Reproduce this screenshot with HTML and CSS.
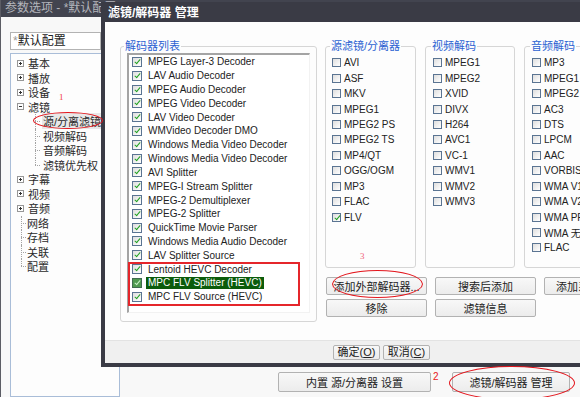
FILE: index.html
```html
<!DOCTYPE html>
<html lang="zh">
<head>
    <meta charset="UTF-8">
    <title>滤镜/解码器 管理</title>
    <link rel="stylesheet" href="styles.css">
</head>
<body>
<div class="desk">
    <div class="win">
        <div class="win-title">参数选项 - *默认配置</div>
        <div class="win-body">
            <div class="side">
                <div class="combo"><span class="star">*</span>默认配置</div>
                <div class="tree">
                    <div class="row node"><i class="exp plus"></i>基本</div>
                    <div class="row node"><i class="exp plus"></i>播放</div>
                    <div class="row node"><i class="exp plus"></i>设备</div>
                    <div class="row node"><i class="exp"></i>滤镜</div>
                    <div class="row sub sel"><span>源/分离滤镜</span></div>
                    <div class="row sub">视频解码</div>
                    <div class="row sub">音频解码</div>
                    <div class="row sub last">滤镜优先权</div>
                    <div class="row node"><i class="exp plus"></i>字幕</div>
                    <div class="row node"><i class="exp plus"></i>视频</div>
                    <div class="row node"><i class="exp plus"></i>音频</div>
                    <div class="row leaf">网络</div>
                    <div class="row leaf">存档</div>
                    <div class="row leaf">关联</div>
                    <div class="row leaf last">配置</div>
                </div>
            </div>
            <div class="main">
                <button class="btn wide">内置 源/分离器 设置</button>
                <button class="btn mid">滤镜/解码器 管理</button>
            </div>
        </div>
    </div>

    <div class="dlg">
        <div class="dlg-title">滤镜/解码器 管理</div>
        <div class="dlg-body">
            <fieldset class="grp big">
                <legend>解码器列表</legend>
                <div class="listbox">
                    <div class="it"><i class="cb on"></i><span class="t">MPEG Layer-3 Decoder</span></div>
                    <div class="it"><i class="cb on"></i><span class="t">LAV Audio Decoder</span></div>
                    <div class="it"><i class="cb on"></i><span class="t">MPEG Audio Decoder</span></div>
                    <div class="it"><i class="cb on"></i><span class="t">MPEG Video Decoder</span></div>
                    <div class="it"><i class="cb on"></i><span class="t">LAV Video Decoder</span></div>
                    <div class="it"><i class="cb on"></i><span class="t">WMVideo Decoder DMO</span></div>
                    <div class="it"><i class="cb on"></i><span class="t">Windows Media Video Decoder</span></div>
                    <div class="it"><i class="cb on"></i><span class="t">Windows Media Video Decoder</span></div>
                    <div class="it"><i class="cb on"></i><span class="t">AVI Splitter</span></div>
                    <div class="it"><i class="cb on"></i><span class="t">MPEG-I Stream Splitter</span></div>
                    <div class="it"><i class="cb on"></i><span class="t">MPEG-2 Demultiplexer</span></div>
                    <div class="it"><i class="cb on"></i><span class="t">MPEG-2 Splitter</span></div>
                    <div class="it"><i class="cb on"></i><span class="t">QuickTime Movie Parser</span></div>
                    <div class="it"><i class="cb on"></i><span class="t">Windows Media Audio Decoder</span></div>
                    <div class="it"><i class="cb on"></i><span class="t">LAV Splitter Source</span></div>
                    <div class="it"><i class="cb on"></i><span class="t">Lentoid HEVC Decoder</span></div>
                    <div class="it hl"><i class="cb on"></i><span class="t">MPC FLV Splitter (HEVC)</span></div>
                    <div class="it"><i class="cb on"></i><span class="t">MPC FLV Source (HEVC)</span></div>
                    <div class="mark"></div>
                </div>
            </fieldset>

            <div class="rcol">
                <div class="groups">
                    <fieldset class="grp sm w91">
                        <legend>源滤镜/分离器</legend>
                        <div class="it"><i class="cb"></i>AVI</div>
                        <div class="it"><i class="cb"></i>ASF</div>
                        <div class="it"><i class="cb"></i>MKV</div>
                        <div class="it"><i class="cb"></i>MPEG1</div>
                        <div class="it"><i class="cb"></i>MPEG2 PS</div>
                        <div class="it"><i class="cb"></i>MPEG2 TS</div>
                        <div class="it"><i class="cb"></i>MP4/QT</div>
                        <div class="it"><i class="cb"></i>OGG/OGM</div>
                        <div class="it"><i class="cb"></i>MP3</div>
                        <div class="it"><i class="cb"></i>FLAC</div>
                        <div class="it"><i class="cb on"></i>FLV</div>
                    </fieldset>
                    <fieldset class="grp sm">
                        <legend>视频解码</legend>
                        <div class="it"><i class="cb"></i>MPEG1</div>
                        <div class="it"><i class="cb"></i>MPEG2</div>
                        <div class="it"><i class="cb"></i>XVID</div>
                        <div class="it"><i class="cb"></i>DIVX</div>
                        <div class="it"><i class="cb"></i>H264</div>
                        <div class="it"><i class="cb"></i>AVC1</div>
                        <div class="it"><i class="cb"></i>VC-1</div>
                        <div class="it"><i class="cb"></i>WMV1</div>
                        <div class="it"><i class="cb"></i>WMV2</div>
                        <div class="it"><i class="cb"></i>WMV3</div>
                    </fieldset>
                    <fieldset class="grp sm">
                        <legend>音频解码</legend>
                        <div class="it"><i class="cb"></i>MP3</div>
                        <div class="it"><i class="cb"></i>MPEG1</div>
                        <div class="it"><i class="cb"></i>MPEG2</div>
                        <div class="it"><i class="cb"></i>AC3</div>
                        <div class="it"><i class="cb"></i>DTS</div>
                        <div class="it"><i class="cb"></i>LPCM</div>
                        <div class="it"><i class="cb"></i>AAC</div>
                        <div class="it"><i class="cb"></i>VORBIS</div>
                        <div class="it"><i class="cb"></i>WMA V1</div>
                        <div class="it"><i class="cb"></i>WMA V2</div>
                        <div class="it"><i class="cb"></i>WMA PRO</div>
                        <div class="it"><i class="cb"></i>WMA 无损</div>
                        <div class="it"><i class="cb"></i>FLAC</div>
                    </fieldset>
                </div>
                <div class="actions">
                    <button class="btn">添加外部解码器...</button>
                    <button class="btn">搜索后添加</button>
                    <button class="btn">添加系统解码器</button>
                    <button class="btn">移除</button>
                    <button class="btn">滤镜信息</button>
                </div>
            </div>
        </div>
        <div class="dlg-foot">
            <button class="btn small">确定(<u>O</u>)</button>
            <button class="btn small">取消(<u>C</u>)</button>
        </div>
    </div>

    <!-- red notes drawn over the screenshot -->
    <div class="ring ring1"></div>
    <div class="ring ring2"></div>
    <div class="ring ring3"></div>
    <span class="num num1">1</span>
    <span class="num num2">2</span>
    <span class="num num3">3</span>
</div>
</body>
</html>
```

FILE: styles.css
```css
body {
    margin: 0;
    font-family: "Liberation Sans", "Noto Sans CJK SC", sans-serif;
    font-size: 10px;
    color: #222;
}
.desk {
    position: relative;
    width: 580px;
    height: 397px;
    overflow: hidden;
    background: #f7f7f7;
}

/* back window */
.win {
    display: flex;
    flex-direction: column;
    height: 100%;
    border-left: 1px solid #5b5c64;
    box-sizing: border-box;
}
.win-title {
    height: 17px;
    line-height: 17px;
    background: #42444f;
    color: #b4b5bc;
    font-size: 12px;
    padding-left: 4px;
    white-space: nowrap;
}
.win-body {
    flex: 1;
    display: flex;
    background: #f8f8f8;
}
.side {
    width: 110px;
    padding: 15px 0 0 9px;
    display: flex;
    flex-direction: column;
    gap: 3px;
}
.combo {
    height: 18px;
    width: 91px;
    box-sizing: border-box;
    border: 1px solid #b3b3b3;
    background: #fff;
    line-height: 16px;
    padding-left: 2px;
    font-size: 12px;
    white-space: nowrap;
}
.combo .star {
    color: #999;
}
.tree {
    flex: 1;
    border: 1px solid #a9bdd8;
    background: #fdfdfd;
    padding-top: 2px;
    font-size: 11px;
}
.tree .row {
    position: relative;
    height: 14.5px;
    display: flex;
    align-items: center;
    white-space: nowrap;
    color: #2a2a2a;
}
.tree .node {
    padding-left: 6px;
}
.tree .leaf {
    padding-left: 16px;
}
.tree .sub {
    padding-left: 32px;
}
.tree .leaf::before,
.tree .sub::before {
    content: "";
    position: absolute;
    left: 10px;
    top: 0;
    bottom: 0;
    border-left: 1px dotted #a3a3a3;
}
.tree .leaf::after,
.tree .sub::after {
    content: "";
    position: absolute;
    left: 10px;
    width: 5px;
    top: 50%;
    border-top: 1px dotted #a3a3a3;
}
.tree .sub::before,
.tree .sub::after {
    left: 24px;
}
.tree .last::before {
    bottom: 50%;
}
.tree .sel span {
    background: #e8e8e8;
    padding: 0 1px;
    margin-left: -1px;
}
.exp {
    position: relative;
    width: 7px;
    height: 7px;
    box-sizing: border-box;
    border: 1px solid #979797;
    background: #fff;
    margin-right: 4px;
    flex: none;
}
.exp::before {
    content: "";
    position: absolute;
    left: 1px;
    right: 1px;
    top: 2px;
    height: 1px;
    background: #333;
}
.exp.plus::after {
    content: "";
    position: absolute;
    top: 1px;
    bottom: 1px;
    left: 2px;
    width: 1px;
    background: #333;
}
.main {
    flex: 1;
    display: flex;
    justify-content: flex-end;
    align-items: flex-end;
    gap: 21px;
    padding: 0 10px 5px 0;
}

/* buttons */
.btn {
    font: inherit;
    font-size: 11px;
    color: #222;
    height: 18px;
    padding: 0;
    border: 1px solid #b2b2b2;
    border-radius: 2px;
    background: linear-gradient(#f8f8f8, #ececec);
    white-space: nowrap;
    overflow: hidden;
}
.btn.wide {
    width: 153px;
    height: 20px;
}
.btn.mid {
    width: 118px;
    height: 20px;
}
.btn.small {
    width: 47px;
    height: 15px;
    line-height: 12px;
}

/* dialog */
.dlg {
    position: absolute;
    left: 101px;
    top: 2px;
    width: 561px;
    height: 365px;
    box-sizing: border-box;
    border: 4px solid #3a3b45;
    border-top: 0;
    background: #3a3b45;
    display: flex;
    flex-direction: column;
}
.dlg-title {
    height: 20px;
    box-sizing: border-box;
    padding: 3px 0 0 3px;
    line-height: 17px;
    color: #fff;
    font-size: 12px;
    font-weight: bold;
    white-space: nowrap;
}
.dlg-body {
    flex: 1;
    display: flex;
    gap: 8px;
    padding: 18px 0 0 15px;
    background: #fdfdfd;
}
.dlg-foot {
    height: 23px;
    box-sizing: border-box;
    border-top: 1px solid #e3e3e3;
    background: #f0f0f0;
    display: flex;
    justify-content: center;
    align-items: center;
    gap: 3px;
}

.grp {
    margin: 0;
    box-sizing: border-box;
    min-width: 0;
    border: 1px solid #d6d6d6;
    border-radius: 3px;
    padding: 3px 0 0 7px;
}
.grp legend {
    font-size: 11px;
    line-height: 12px;
    color: #2c62d2;
    padding: 0 1px;
    margin-left: -2px;
    white-space: nowrap;
}
.grp.big {
    width: 197px;
    height: 282px;
    padding: 1px 6px 8px 6px;
}
.grp.big legend {
    margin-left: -3px;
}
.grp.sm {
    width: 90px;
    height: 228px;
}
.grp.w91 {
    width: 91px;
    padding-left: 6px;
}
.sm .it {
    height: 15.45px;
    display: flex;
    align-items: center;
    gap: 3px;
    white-space: nowrap;
}
.sm .cb {
    width: 9px;
    height: 9px;
}

.listbox {
    position: relative;
    height: 260px;
    box-sizing: border-box;
    border-top: 2px solid #a4a4a4;
    border-left: 2px solid #a4a4a4;
    border-right: 1px solid #f2f2f2;
    border-bottom: 1px solid #f2f2f2;
    background: #fff;
}
.listbox .it {
    height: 13.82px;
    display: flex;
    align-items: center;
    gap: 6px;
    padding-left: 3px;
    white-space: nowrap;
}
.listbox .cb {
    width: 10px;
    height: 10px;
}
.it.hl .t {
    background: #0b5c0b;
    color: #fff;
    padding: 0 2px;
    margin-left: -2px;
    line-height: 12px;
}
.it.hl .cb {
    background: #4f9a4f;
    border-color: #3f6b4f;
}
.it.hl .cb::after {
    border-color: #c8f0c8;
}
.mark {
    position: absolute;
    left: -1px;
    top: 207px;
    width: 172px;
    height: 44px;
    box-sizing: border-box;
    border: 2px solid #e5262b;
}

.cb {
    position: relative;
    flex: none;
    box-sizing: border-box;
    border: 1px solid #5a7492;
    background: linear-gradient(135deg, #dedede, #fff);
}
.cb.on::after {
    content: "";
    position: absolute;
    left: 2.5px;
    top: 0;
    width: 2px;
    height: 5px;
    border: solid #21a121;
    border-width: 0 1.5px 1.5px 0;
    transform: rotate(40deg);
}

.rcol {
    display: flex;
    flex-direction: column;
}
.groups {
    display: flex;
    gap: 9px;
}
.actions {
    margin: 9px 0 0 1px;
    display: grid;
    grid-template-columns: repeat(3, 101px);
    grid-auto-rows: 18px;
    column-gap: 8px;
    row-gap: 4px;
}

/* annotations */
.ring {
    position: absolute;
    box-sizing: border-box;
    border: 1.5px solid #e3161d;
    border-radius: 50%;
}
.ring1 {
    left: 33px;
    top: 112px;
    width: 70px;
    height: 17px;
}
.ring2 {
    left: 449px;
    top: 366px;
    width: 126px;
    height: 34px;
}
.ring3 {
    left: 332px;
    top: 270px;
    width: 91px;
    height: 28px;
}
.num {
    position: absolute;
    font-family: "Liberation Serif", serif;
    font-size: 9px;
    line-height: 9px;
}
.num1 {
    left: 59px;
    top: 93px;
    color: #f03c3c;
}
.num2 {
    left: 433px;
    top: 372px;
    color: #e82020;
    font-family: "Liberation Sans", sans-serif;
    font-size: 10px;
}
.num3 {
    left: 360px;
    top: 252px;
    color: #f0607a;
}
```
